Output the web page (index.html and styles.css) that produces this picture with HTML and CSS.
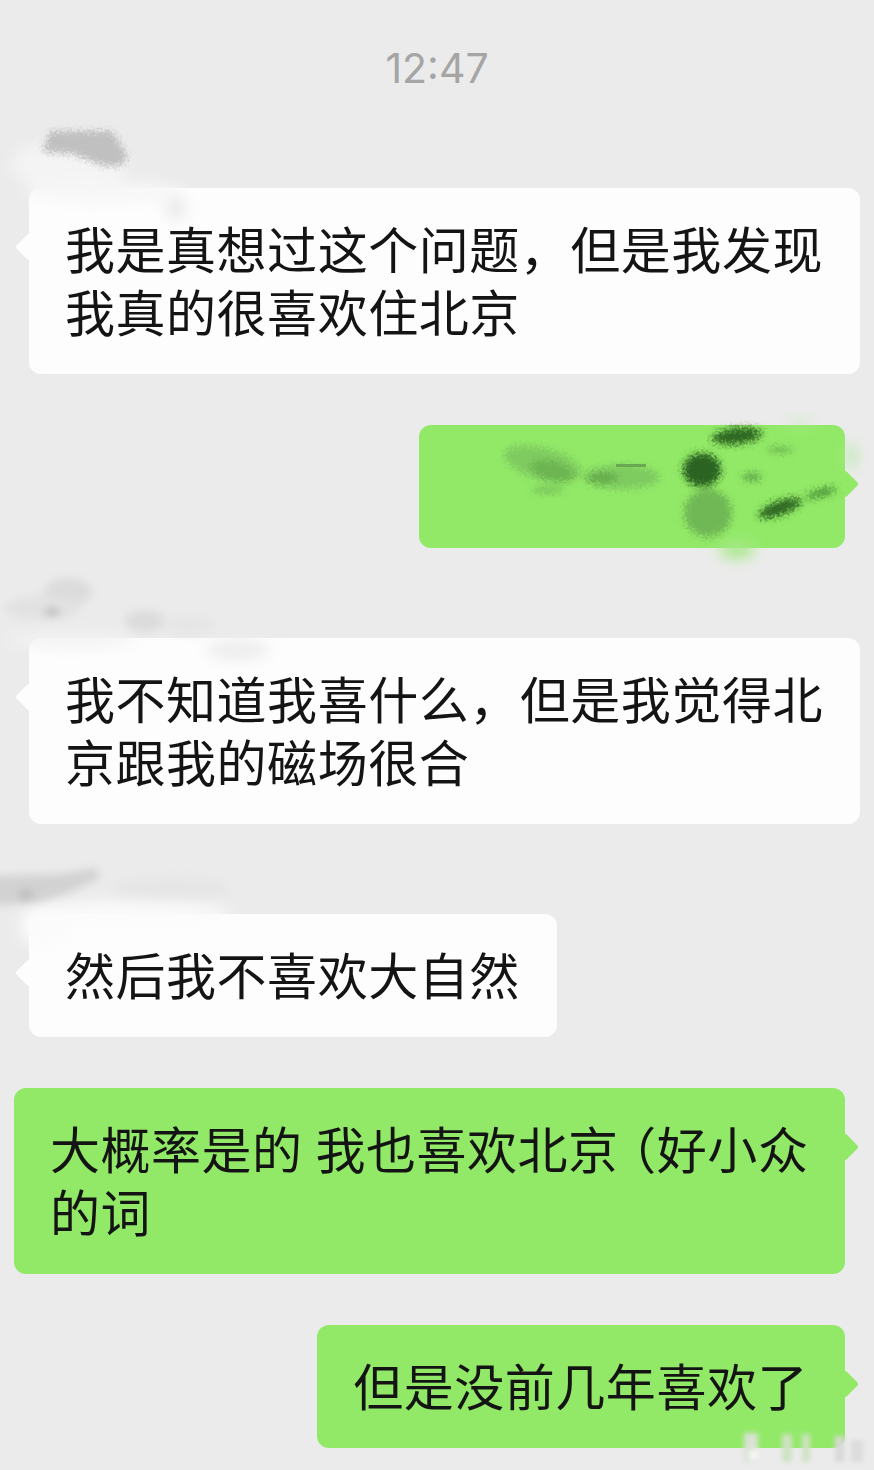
FILE: index.html
```html
<!DOCTYPE html>
<html lang="zh-CN">
<head>
    <meta charset="UTF-8">
    <meta name="viewport" content="width=device-width, initial-scale=1.0">
    <title>聊天记录</title>
    <link rel="stylesheet" href="styles.css">
</head>
<body>
    <div class="chat">
        <div class="time">12:47</div>

        <div class="msg in">
            <div class="sender"></div>
            <div class="bubble">我是真想过这个问题，但是我发现我真的很喜欢住北京</div>
        </div>

        <div class="msg out">
            <div class="bubble redacted"></div>
        </div>

        <div class="msg in">
            <div class="sender"></div>
            <div class="bubble">我不知道我喜什么，但是我觉得北京跟我的磁场很合</div>
        </div>

        <div class="msg in">
            <div class="sender"></div>
            <div class="bubble">然后我不喜欢大自然</div>
        </div>

        <div class="msg out">
            <div class="bubble half-paren">大概率是的 我也喜欢北京 （好小众的词</div>
        </div>

        <div class="msg out">
            <div class="bubble">但是没前几年喜欢了</div>
        </div>
    </div>

    <!-- 打码的涂抹痕迹 -->
    <svg class="smudges" width="874" height="1470" viewBox="0 0 874 1470" aria-hidden="true">
        <defs>
            <filter id="soft" x="-50%" y="-50%" width="200%" height="200%">
                <feGaussianBlur stdDeviation="7"/>
            </filter>
            <filter id="faint" x="-50%" y="-50%" width="200%" height="200%">
                <feGaussianBlur stdDeviation="4"/>
            </filter>
            <filter id="brush" x="-30%" y="-30%" width="160%" height="160%">
                <feTurbulence type="fractalNoise" baseFrequency="0.4" numOctaves="2" seed="4" result="noise"/>
                <feGaussianBlur in="SourceGraphic" stdDeviation="3" result="b"/>
                <feDisplacementMap in="b" in2="noise" scale="11" xChannelSelector="R" yChannelSelector="G"/>
            </filter>
            <filter id="mark" x="-50%" y="-50%" width="200%" height="200%">
                <feGaussianBlur stdDeviation="2.5"/>
            </filter>
        </defs>

        <!-- 第一个昵称 -->
        <g filter="url(#soft)">
            <ellipse cx="70" cy="165" rx="58" ry="26" fill="#f4f4f4"/>
            <ellipse cx="105" cy="192" rx="80" ry="11" fill="#f7f7f7"/>
            <ellipse cx="176" cy="208" rx="11" ry="12" fill="#ececec"/>
        </g>
        <g filter="url(#brush)">
            <path d="M42 152 L50 131 L112 131 L128 156 L122 166 L104 166 L72 154 Z" fill="#c0c0c0"/>
        </g>

        <!-- 第二个昵称 -->
        <g filter="url(#soft)">
            <ellipse cx="70" cy="640" rx="65" ry="8" fill="#f3f3f3"/>
            <ellipse cx="238" cy="650" rx="32" ry="11" fill="#eeeeee"/>
        </g>
        <g filter="url(#faint)">
            <ellipse cx="68" cy="592" rx="24" ry="14" fill="#dcdcdc"/>
            <ellipse cx="42" cy="608" rx="38" ry="12" fill="#e2e2e2"/>
            <ellipse cx="145" cy="621" rx="20" ry="11" fill="#dcdcdc"/>
            <ellipse cx="190" cy="625" rx="24" ry="10" fill="#e6e6e6"/>
            <ellipse cx="52" cy="612" rx="8" ry="3" fill="#a8a8a8"/>
        </g>

        <!-- 第三个昵称 -->
        <g filter="url(#soft)">
            <ellipse cx="130" cy="912" rx="100" ry="11" fill="#fbfbfb"/>
            <ellipse cx="45" cy="925" rx="25" ry="22" fill="#fbfbfb"/>
            <ellipse cx="170" cy="890" rx="60" ry="12" fill="#e5e5e5"/>
        </g>
        <g filter="url(#faint)">
            <path d="M-8 876 L60 874 L96 868 L100 878 L70 892 L40 902 L-8 906 Z" fill="#d2d2d2"/>
            <ellipse cx="26" cy="895" rx="7" ry="5" fill="#b8b8b8"/>
        </g>

        <!-- 绿色气泡里的涂抹 -->
        <g filter="url(#soft)">
            <ellipse cx="737" cy="550" rx="18" ry="9" fill="#a8e88b"/>
            <ellipse cx="851" cy="456" rx="4" ry="13" fill="#aee899"/>
            <ellipse cx="800" cy="422" rx="14" ry="2" fill="#bfe9ab"/>
        </g>
        <g filter="url(#brush)">
            <ellipse cx="543" cy="464" rx="40" ry="16" transform="rotate(15 543 464)" fill="#7fcb61"/>
            <ellipse cx="552" cy="471" rx="22" ry="10" transform="rotate(15 552 471)" fill="#6cb551"/>
            <ellipse cx="622" cy="477" rx="38" ry="12" fill="#7ecb60"/>
            <ellipse cx="602" cy="478" rx="16" ry="6" fill="#66ad4c"/>
            <ellipse cx="548" cy="490" rx="16" ry="3" fill="#74bd58"/>
            <ellipse cx="708" cy="513" rx="24" ry="24" transform="rotate(30 708 513)" fill="#6fb854"/>
            <ellipse cx="702" cy="470" rx="19" ry="17" fill="#2c6320"/>
            <ellipse cx="737" cy="436" rx="25" ry="8" transform="rotate(-6 737 436)" fill="#2f6823"/>
            <ellipse cx="752" cy="477" rx="10" ry="4" fill="#62aa4a"/>
            <ellipse cx="780" cy="508" rx="23" ry="7" transform="rotate(-20 780 508)" fill="#2f6823"/>
            <ellipse cx="821" cy="493" rx="16" ry="4" transform="rotate(-15 821 493)" fill="#4c9537"/>
            <ellipse cx="780" cy="450" rx="13" ry="3" fill="#6cb550"/>
        </g>
        <rect class="smudge-line" x="616" y="464" width="30" height="3"/>

        <!-- 右下角水印 -->
        <g filter="url(#mark)">
            <rect x="744" y="1433" width="14" height="29" fill="#d9e2d4"/>
            <rect x="749" y="1450" width="9" height="10" fill="#f6f6f6"/>
            <rect x="782" y="1434" width="10" height="28" fill="#cfe2c3"/>
            <rect x="802" y="1434" width="8" height="28" fill="#cfe2c3"/>
            <rect x="835" y="1436" width="9" height="26" fill="#d8d8d8"/>
            <rect x="851" y="1440" width="12" height="22" fill="#dcdcdc"/>
        </g>
    </svg>
</body>
</html>
```

FILE: styles.css
```css
body {
    margin: 0;
    background-color: #ebebeb;
    font-family: "Noto Sans CJK SC", "Noto Sans", sans-serif;
    color: #141414;
    position: relative;
    overflow: hidden;
}

.chat {
    height: 1470px;
    box-sizing: border-box;
    padding-top: 44px;
    display: flex;
    flex-direction: column;
    gap: 51px;
}

.time {
    height: 48px;
    margin-bottom: 6px;
    font-family: "Inter", sans-serif;
    font-size: 41px;
    line-height: 48px;
    text-align: center;
    color: #a5a5a5;
}

.msg {
    display: flex;
    flex-direction: column;
}

.msg.in {
    padding-left: 29px;
    align-items: flex-start;
}

.msg.out {
    padding-right: 29px;
    align-items: flex-end;
}

.sender {
    height: 39px;
}

.bubble {
    position: relative;
    box-sizing: border-box;
    max-width: 831px;
    padding: 28px 37px 32px 36px;
    border-radius: 12px;
    font-size: 50px;
    line-height: 63px;
    letter-spacing: 0.53px;
}

.in .bubble {
    background-color: #fdfdfd;
}

.out .bubble {
    background-color: #92e967;
}

/* 气泡的小尖角 */
.bubble::before {
    content: "";
    position: absolute;
    top: 49px;
    width: 20px;
    height: 20px;
    border-radius: 3px;
    background-color: inherit;
    transform: rotate(45deg);
}

.in .bubble::before {
    left: -10px;
}

.out .bubble::before {
    right: -10px;
}

.redacted {
    width: 426px;
    height: 123px;
}

/* 括号只占半格 */
.half-paren {
    width: 831px;
    padding-right: 20px;
    font-feature-settings: "halt";
    word-spacing: 1px;
}

.smudges {
    position: absolute;
    left: 0;
    top: 0;
    pointer-events: none;
}

.smudge-line {
    fill: #6aa852;
}
```
